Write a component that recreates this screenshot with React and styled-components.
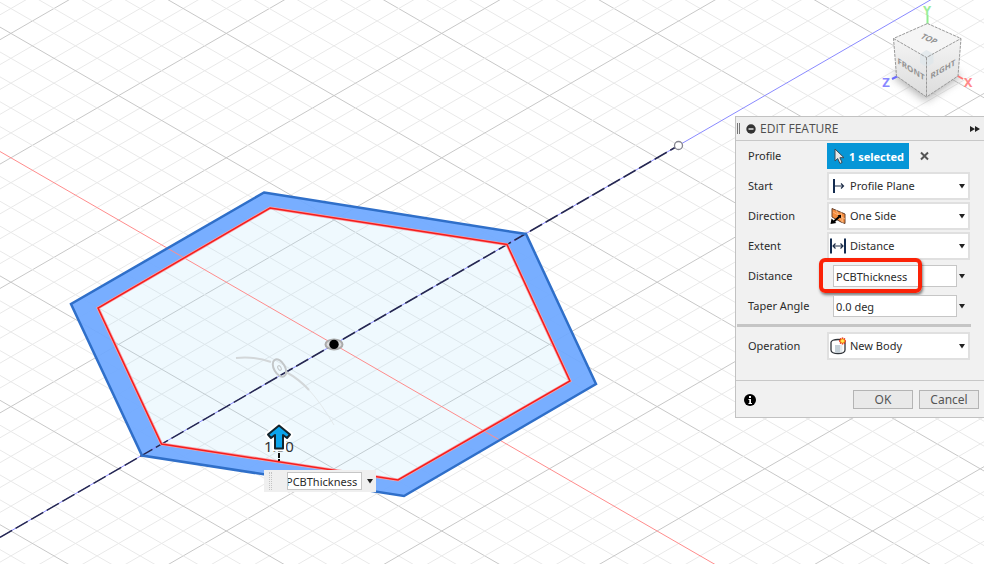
import React, { useState } from 'react'
import styled, { createGlobalStyle } from 'styled-components'

const GlobalStyle = createGlobalStyle`
  * {
    box-sizing: border-box;
  }
  body {
    margin: 0;
    background: #fff;
    font-family: "Noto Sans", "Open Sans", sans-serif;
    font-size: 11px;
    color: #2b2b2b;
  }
`

const Workspace = styled.main`
  position: relative;
  width: 100%;
  height: 100vh;
  overflow: hidden;
`

const Canvas = styled.svg`
  display: block;
  width: 100%;
  height: 100%;
`

const ViewCube = styled.svg`
  position: absolute;
  top: 0;
  right: 0;
`

const Panel = styled.form`
  position: absolute;
  top: 116px;
  right: 0;
  width: 249px;
  background: #f1f1f1;
  border: 1px solid #c2c2c2;
  border-right: 0;
`

const PanelHeader = styled.header`
  display: flex;
  align-items: center;
  height: 24px;
  padding: 0 4px 0 1px;
  background: #efefef;
  border-bottom: 1px solid #c8c8c8;
`

const Grip = styled.span`
  width: 3px;
  height: 11px;
  margin-right: 6px;
  border: solid #777;
  border-width: 0 1px;
`

const IconButton = styled.button`
  display: flex;
  align-items: center;
  padding: 0;
  border: 0;
  background: none;
  cursor: pointer;
`

const Title = styled.h1`
  flex: 1;
  margin: 0 0 0 4px;
  font: 400 12px/16px "Open Sans", sans-serif;
  color: #4e4e4e;
`

const Row = styled.div`
  display: flex;
  align-items: center;
  height: 30px;
  padding: 0 14px 0 12px;
`

const Label = styled.label`
  flex: 0 0 79px;
  line-height: 16px;
  white-space: nowrap;
`

const Selection = styled.button`
  display: flex;
  align-items: center;
  gap: 4px;
  height: 26px;
  margin-right: 11px;
  padding: 0 5px 0 7px;
  border: 0;
  background: #0696d7;
  color: #fff;
  font: 700 11px "Noto Sans", sans-serif;
  white-space: nowrap;
`

const SelectBox = styled.div`
  display: flex;
  flex: 1;
  align-items: center;
  height: 28px;
  padding: 0 1px;
  background: #fff;
  border: 2px solid #e0e0e0;
`

const Select = styled.select`
  flex: 1;
  min-width: 0;
  height: 16px;
  margin-left: 2px;
  padding: 0;
  appearance: none;
  border: 0;
  background: transparent;
  color: #2b2b2b;
  font: inherit;
  line-height: 16px;
`

const ValueBox = styled.div`
  position: relative;
  display: flex;
  flex: 1;
  align-items: center;
  min-width: 0;
  padding: 0 3px 0 6px;
`

const TextInput = styled.input`
  flex: 1;
  min-width: 0;
  height: ${(p) => (p.$compact ? '18px' : '22px')};
  padding: ${(p) => (p.$compact ? '0' : '0 2px')};
  text-indent: ${(p) => (p.$compact ? '-2px' : '0')};
  border: 1px solid #c6c6c6;
  border-radius: 0;
  background: #fff;
  color: #2b2b2b;
  font: inherit;
`

const Highlight = styled.span`
  position: absolute;
  top: -7px;
  left: -8px;
  width: 103px;
  height: 35px;
  border: 4px solid #fb2207;
  border-radius: 6px;
  box-shadow: 1px 2px 3px rgba(0, 0, 0, 0.5);
  pointer-events: none;
`

const Divider = styled.hr`
  height: 3px;
  margin: 3px 13px 4px 1px;
  border: 0;
  background: #c5c5c5;
`

const PanelFooter = styled.footer`
  display: flex;
  align-items: center;
  gap: 6px;
  height: 37px;
  margin-top: 19px;
  padding: 1px 5px 0 8px;
  border-top: 1px solid #c8c8c8;
`

const Spacer = styled.span`
  flex: 1;
`

const Button = styled.button`
  width: 60px;
  height: 19px;
  padding: 0;
  border: 1px solid #b4b4b4;
  background: #e9e9e9;
  color: #555;
  font: 12px/16px "Noto Sans", sans-serif;
`

const FloatingInput = styled.div`
  position: absolute;
  top: 470px;
  left: 264px;
  display: flex;
  align-items: center;
  width: 112px;
  height: 22px;
  padding: 0 1px 0 5px;
  background: #efefef;
`

const DotGrip = styled.span`
  width: 3px;
  height: 18px;
  margin-right: 15px;
  border: dotted #c4c4c4;
  border-width: 0 1px;
`

const CaretIcon = styled.svg`
  flex: 0 0 10px;
  margin-left: ${(p) => (p.$gap ? '3px' : '0')};
  pointer-events: none;
`

const Caret = ({ gap }) => (
  <CaretIcon $gap={gap} width="10" height="8" viewBox="0 0 10 8">
    <path d="M2 2h6L5 6.500z" fill="#222" />
  </CaretIcon>
)

const CursorIcon = () => (
  <svg width="11" height="17" viewBox="0 0 11 17">
    <path d="M1 1v12l2.700-2.500 2.200 5 2.200-1-2.200-4.800H10z" fill="#e8e8e8" stroke="#3e4a55" />
  </svg>
)

const StartIcon = () => (
  <svg width="18" height="18" viewBox="0 0 18 18">
    <path d="M4 2v14" stroke="#142c50" strokeWidth="2" />
    <path d="M5 9h8M11 6.500L13.500 9 11 11.500" fill="none" stroke="#20304a" strokeWidth="1.200" />
  </svg>
)

const DirectionIcon = () => (
  <svg width="18" height="18" viewBox="0 0 18 18">
    <path d="M2 1.500L15 7v9.500l-4-1.500L2 10z" fill="#f58b3c" stroke="#66412b" />
    <path d="M3 5l12 7M6 3l6 12M11 5l2 11" stroke="#fcc08d" strokeWidth="0.800" />
    <path d="M9.500 9.500L4 14.500" stroke="#000" strokeWidth="2" />
    <path d="M0.500 17l1-5.500L6.300 16z" fill="#000" />
    <path d="M7.500 8H11v3.500z" fill="#000" />
  </svg>
)

const DistanceIcon = () => (
  <svg width="18" height="18" viewBox="0 0 18 18">
    <path d="M1 1.500v15M15 1.500v15" stroke="#142c50" strokeWidth="2" />
    <path d="M3 9h10.500M5.500 6.500L3 9l2.500 2.500M10.500 6.500L13 9 10.500 11.500" fill="none" stroke="#20304a" strokeWidth="1.200" />
  </svg>
)

const BodyIcon = () => (
  <svg width="18" height="18" viewBox="0 0 18 18">
    <path d="M1 5.500C1 3.500 4 2.500 8 2.500s7 1 7 3V13c0 2.500-3 3.500-7 3.500S1 15.500 1 13z" fill="#fff" stroke="#30343a" strokeWidth="1.300" />
    <path d="M5 8h5v7.800H5z" fill="#c5d0d8" />
    <path d="M10 8h2.500v7H10z" fill="#e4eaee" />
    <path d="M12.500 0.500v7M9 4h7M10 1.500l5 5M15 1.500l-5 5" stroke="#e8260c" strokeWidth="1.500" />
    <circle cx="12.500" cy="4" r="2" fill="#ffee55" stroke="#f59a1c" />
  </svg>
)

// The grid is isometric and centred on the sketch origin.
const ORIGIN = { x: 334, y: 344.4 }
const SLOPE = 0.5775
const STEP = 24.88
const REACH = 2400

const gridLines = []
for (let i = -90; i <= 90; i++) {
  if (i !== 0) gridLines.push(i)
}

const axisLine = (direction, offset = 0) => ({
  x1: ORIGIN.x - REACH,
  y1: ORIGIN.y + offset - direction * SLOPE * REACH,
  x2: ORIGIN.x + REACH,
  y2: ORIGIN.y + offset + direction * SLOPE * REACH,
})

const Grid = () => (
  <g strokeWidth="1">
    {gridLines.map((i) => {
      const stroke = i % 5 === 0 ? '#c8c8c8' : '#e9e9e9'
      return (
        <g key={i} stroke={stroke}>
          <line {...axisLine(1, i * STEP)} />
          <line {...axisLine(-1, i * STEP)} />
        </g>
      )
    })}
  </g>
)

const OUTER = '264,192.500 526,234 596,384 404,496 142,455.500 71,304'
const INNER = '270,208 507,244.500 570,381 398,480 161.500,444 98,308'

const Sketch = () => (
  <Canvas aria-label="Sketch canvas">
    <Grid />
    <path
      d={`M${OUTER.split(' ').join('L')}ZM${INNER.split(' ').join('L')}Z`}
      fill="#6ea8ff"
      fillOpacity="0.93"
      fillRule="evenodd"
    />
    <polygon points={INNER} fill="#b0e0fa" fillOpacity="0.2" />
    <line {...axisLine(1)} stroke="#ff8c8c" />
    <line {...axisLine(-1)} stroke="#8a8aff" />
    <line x1="0" y1="537.300" x2="675" y2="147.500" stroke="#262850" strokeWidth="1.500" strokeDasharray="14 4" />
    <polygon points={OUTER} fill="none" stroke="#2f6fc9" strokeWidth="2.500" />
    <polygon points={INNER} fill="none" stroke="#f9a3a8" strokeWidth="3" />
    <polygon points={INNER} fill="none" stroke="#f41d1d" strokeWidth="1.500" />
    <circle cx="678.500" cy="145.500" r="4" fill="#fff" stroke="#85858f" strokeWidth="1.300" />

    <ellipse cx="334" cy="344.400" rx="8.500" ry="5" fill="#ddd" stroke="#aaa" strokeWidth="2" />
    <circle cx="334" cy="344.400" r="4.700" fill="#000" />

    <path d="M236 358Q254 356 271 362" fill="none" stroke="#d3d7d9" strokeWidth="2" />
    <path d="M286 372Q299 379 309 390" fill="none" stroke="#d3d7d9" strokeWidth="2" />
    <path d="M309 390Q321 403 334 425" fill="none" stroke="#e3e9eb" strokeWidth="1" />
    <g transform="rotate(-30 279.500 368)" fill="none" stroke="#c3c7c9">
      <ellipse cx="279.500" cy="368" rx="5.500" ry="9.500" strokeWidth="2" />
      <ellipse cx="279.500" cy="368" rx="1.500" ry="2.500" />
    </g>

    <text x="264" y="452" fontSize="15" fill="#333">1.00</text>
    <path d="M279 450v11" stroke="#111" strokeWidth="2" strokeDasharray="2 1 5 1" />
    <path
      d="M279 425.500L290 434.500 287 438 283 435V448.500H275V435L271 438 268 434.500Z"
      fill="#fff"
      stroke="#fff"
      strokeWidth="6"
      strokeLinejoin="round"
    />
    <path
      d="M279 425.500L290 434.500 287 438 283 435V448.500H275V435L271 438 268 434.500Z"
      fill="#0ba5ec"
      stroke="#14242c"
      strokeWidth="2"
      strokeLinejoin="round"
    />
  </Canvas>
)

const Cube = () => (
  <ViewCube width="120" height="112" viewBox="0 0 120 112" aria-label="View cube">
    <defs>
      <filter id="cubeShadow" x="-50%" y="-50%" width="200%" height="200%">
        <feGaussianBlur stdDeviation="4" />
      </filter>
      <linearGradient id="cubeSide" x1="0" y1="0" x2="0" y2="1">
        <stop offset="0" stopColor="#f4f4f4" />
        <stop offset="1" stopColor="#dcdcdc" />
      </linearGradient>
    </defs>
    <polygon points="28,76 62,58 98,76 62,101" fill="#777" opacity="0.55" filter="url(#cubeShadow)" />
    <path d="M63.500 15v9" stroke="#90ee90" strokeWidth="2" />
    <path d="M28 79l6-3" stroke="#6b6bff" strokeWidth="2" />
    <path d="M92 75l7 4" stroke="#f77" strokeWidth="2" />
    <polygon points="63.500,23.500 97,38.500 62.500,57.500 29.500,38.500" fill="#f5f5f5" />
    <polygon points="29.500,38.500 62.500,57.500 62.500,97 32.500,76" fill="url(#cubeSide)" />
    <polygon points="97,38.500 62.500,57.500 62.500,97 94,76" fill="url(#cubeSide)" />
    <path d="M56 54l6.500-4 7 4v9l-7 4-6.500-4z" fill="#dde5ea" opacity="0.7" />
    <g fill="none" stroke="#999" strokeDasharray="3 1">
      <polygon points="63.500,23.500 97,38.500 94,76 62.500,97 32.500,76 29.500,38.500" />
      <path d="M29.500 38.500l33 19 34.500-19M62.500 57.500V97" />
    </g>
    <g fill="#939393" fontSize="8" fontWeight="700" textAnchor="middle">
      <text transform="translate(63 41) rotate(25) skewX(-20)">TOP</text>
      <text transform="translate(47 72) skewY(33)">FRONT</text>
      <text transform="translate(79 72) skewY(-30)">RIGHT</text>
    </g>
    <g fontSize="13" textAnchor="middle" fontWeight="700">
      <text x="63" y="15" fill="#9bee9b">Y</text>
      <text x="22" y="87" fill="#8888ff">Z</text>
      <text x="104" y="87" fill="#ff8a8a">X</text>
    </g>
  </ViewCube>
)

const SelectRow = ({ id, label, icon, options }) => (
  <Row>
    <Label htmlFor={id}>{label}</Label>
    <SelectBox>
      {icon}
      <Select id={id}>
        {options.map((option) => (
          <option key={option}>{option}</option>
        ))}
      </Select>
      <Caret />
    </SelectBox>
  </Row>
)

const App = () => {
  const [distance, setDistance] = useState('PCBThickness')
  const [angle, setAngle] = useState('0.0 deg')

  return (
    <Workspace>
      <GlobalStyle />
      <Sketch />
      <Cube />

      <FloatingInput>
        <DotGrip />
        <TextInput
          $compact
          aria-label="Distance on canvas"
          value={distance}
          onChange={(e) => setDistance(e.target.value)}
        />
        <Caret gap />
      </FloatingInput>

      <Panel onSubmit={(e) => e.preventDefault()}>
        <PanelHeader>
          <Grip />
          <IconButton type="button" aria-label="Collapse">
            <svg width="10" height="10" viewBox="0 0 10 10">
              <circle cx="5" cy="5" r="4.700" fill="#333" />
              <path d="M2.500 5h5" stroke="#fff" strokeWidth="1.300" />
            </svg>
          </IconButton>
          <Title>EDIT FEATURE</Title>
          <IconButton type="button" aria-label="Dock panel">
            <svg width="10" height="8" viewBox="0 0 10 8">
              <path d="M0 1l5 3-5 3zM5 1l5 3-5 3z" fill="#222" />
            </svg>
          </IconButton>
        </PanelHeader>

        <Row>
          <Label htmlFor="profile">Profile</Label>
          <Selection id="profile" type="button">
            <CursorIcon />
            1 selected
          </Selection>
          <IconButton type="button" aria-label="Clear selection">
            <svg width="9" height="10" viewBox="0 0 9 10">
              <path d="M1 1.500l7 7M8 1.500l-7 7" stroke="#555" strokeWidth="2" />
            </svg>
          </IconButton>
        </Row>
        <SelectRow id="start" label="Start" icon={<StartIcon />} options={['Profile Plane', 'Offset Plane', 'Object']} />
        <SelectRow id="direction" label="Direction" icon={<DirectionIcon />} options={['One Side', 'Two Sides', 'Symmetric']} />
        <SelectRow id="extent" label="Extent" icon={<DistanceIcon />} options={['Distance', 'To Object', 'All']} />
        <Row>
          <Label htmlFor="distance">Distance</Label>
          <ValueBox>
            <TextInput id="distance" value={distance} onChange={(e) => setDistance(e.target.value)} />
            <Caret />
            <Highlight />
          </ValueBox>
        </Row>
        <Row>
          <Label htmlFor="taper">Taper Angle</Label>
          <ValueBox>
            <TextInput id="taper" value={angle} onChange={(e) => setAngle(e.target.value)} />
            <Caret />
          </ValueBox>
        </Row>
        <Divider />
        <SelectRow id="operation" label="Operation" icon={<BodyIcon />} options={['New Body', 'Join', 'Cut', 'Intersect']} />

        <PanelFooter>
          <IconButton type="button" aria-label="Information">
            <svg width="12" height="12" viewBox="0 0 12 12">
              <circle cx="6" cy="6" r="6" fill="#000" />
              <path d="M5 2h2v2H5zM4.500 5H7v4h1v1H4.500V9h.8V6h-.8z" fill="#fff" />
            </svg>
          </IconButton>
          <Spacer />
          <Button type="submit">OK</Button>
          <Button type="button">Cancel</Button>
        </PanelFooter>
      </Panel>
    </Workspace>
  )
}

export default App
